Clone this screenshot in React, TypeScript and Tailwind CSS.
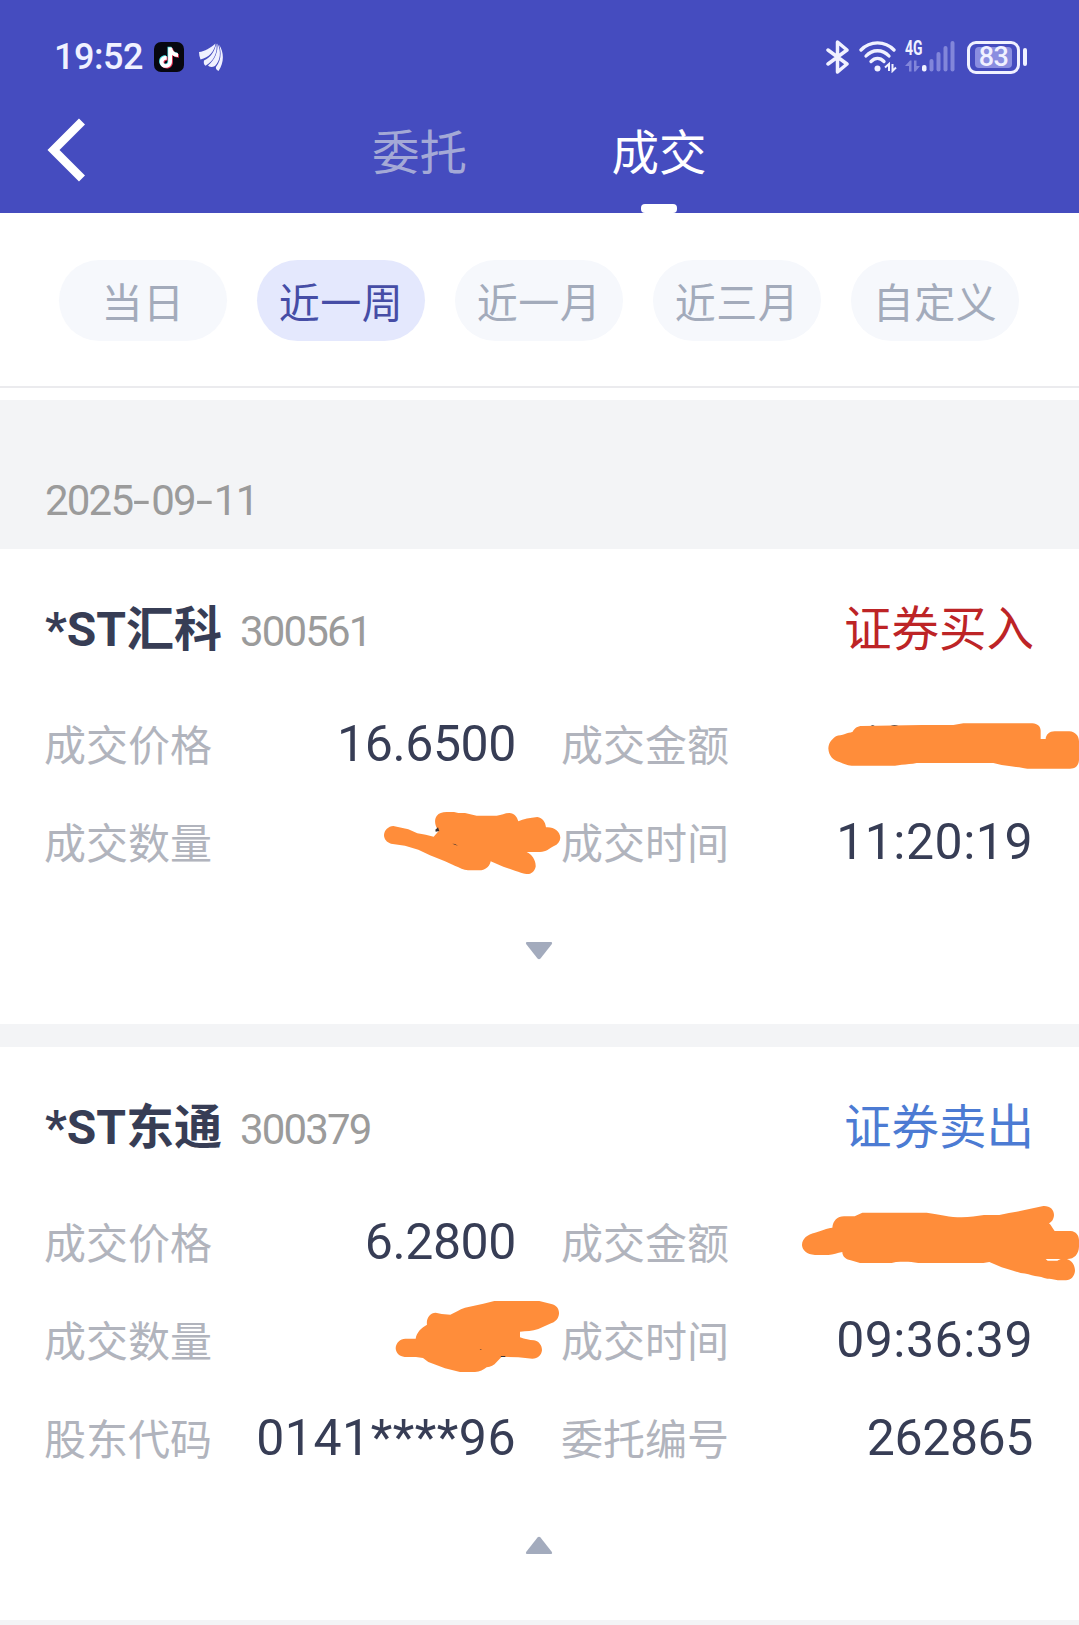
import React from 'react'
import clsx from 'clsx'

interface Field {
  label: string
  value?: string
}

interface Scribble {
  transform: string
  path: string
  specks?: string
}

interface Trade {
  name: string
  code: string
  side: 'buy' | 'sell'
  sideLabel: string
  fields: Field[]
  expanded: boolean
  scribbles: Scribble[]
}

const ranges = ['当日', '近一周', '近一月', '近三月', '自定义']

const trades: Trade[] = [
  {
    name: '*ST汇科',
    code: '300561',
    side: 'buy',
    sideLabel: '证券买入',
    expanded: false,
    fields: [
      { label: '成交价格', value: '16.6500' },
      { label: '成交金额' },
      { label: '成交数量' },
      { label: '成交时间', value: '11:20:19' },
    ],
    scribbles: [
      {
        transform: 'translate(780 31) scale(0.33333)',
        path: 'M145 505C146 485 160 475 168 469C176 464 186 467 195 462C203 457 210 459 218 455C223 445 232 438 246 438L425 435L520 435L550 430H757C773 431 782 440 782 452V477H797C798 464 808 454 824 454H868C886 455 897 468 897 484V540C896 556 887 566 870 566H742C728 565 722 561 708 561C695 558 680 558 665 555L640 549H410C395 552 380 553 365 554L345 557H215C200 557 190 550 178 546C160 542 146 528 145 505Z',
        specks: 'M272 438Q278 434 284 438ZM332 437Q343 433 355 437Z',
      },
      {
        transform: 'translate(330 151) scale(0.33333)',
        path: 'M162 405C163 390 175 379 190 378L235 388L262 400C280 402 295 407 311 410L326 393C314 378 312 360 320 348C327 339 336 336 350 336H372L385 339H405L440 347H500C515 346 524 339 538 339C553 340 561 350 565 364C580 357 600 353 622 351C638 353 646 366 648 382C672 380 690 394 691 413C690 425 683 433 672 438C656 446 650 455 630 456H590C606 464 618 480 617 500C613 516 603 523 589 522C578 521 567 516 557 513L520 500L482 484C480 497 470 507 454 511H414C400 510 389 503 376 498L345 484L300 466L265 449L225 437L183 431C170 427 162 417 162 405Z',
        specks: 'M316 389L324 382L328 393L317 395ZM367 431L375 432L384 437L377 435Z',
      },
    ],
  },
  {
    name: '*ST东通',
    code: '300379',
    side: 'sell',
    sideLabel: '证券卖出',
    expanded: true,
    fields: [
      { label: '成交价格', value: '6.2800' },
      { label: '成交金额' },
      { label: '成交数量' },
      { label: '成交时间', value: '09:36:39' },
      { label: '股东代码', value: '0141****96' },
      { label: '委托编号', value: '262865' },
    ],
    scribbles: [
      {
        transform: 'translate(780 33) scale(0.33333)',
        path: 'M66 495C67 474 82 464 105 458C125 453 140 444 157 443C159 422 172 409 192 409H224L247 398H440C480 403 510 412 545 412C570 412 590 408 612 405H658C680 399 700 397 720 393L790 378C810 377 822 389 822 405C821 419 815 426 807 430C814 436 817 444 824 453H872C888 454 897 467 897 480V500C896 522 883 537 862 537H797L803 542H832C840 538 848 535 858 536C876 540 885 556 885 573C883 590 873 600 858 601H838C825 600 820 596 802 596C788 593 780 589 765 588C752 586 740 580 722 579L665 562L628 546L610 549H415C390 544 370 545 348 546L335 549H240L212 541C196 538 187 528 187 516C172 519 160 524 145 525H105C80 523 67 511 66 495Z',
      },
      {
        transform: 'translate(330 153) scale(0.33333)',
        path: 'M197 445C198 427 211 417 226 416H257C260 396 275 383 291 374C288 355 300 338 317 338L335 342L361 344C375 338 388 328 405 323L460 311L493 303H628L664 312C680 315 688 328 687 341C686 354 678 364 665 369L625 387C606 394 590 393 570 395V412C585 417 598 420 612 421C628 424 636 437 636 451C634 466 624 476 607 476L565 472L515 470L500 486C492 497 482 500 470 502C460 510 450 516 435 516H390L345 505L295 486L279 474L258 471H224C208 469 198 460 197 445Z',
        specks: 'M512 468H526V471H513ZM449 447L455 448L453 450Z',
      },
    ],
  },
]

function BluetoothIcon() {
  return (
    <svg width="24" height="34" viewBox="0 0 24 34" fill="none" stroke="#f0f1ff" strokeWidth="3.500" strokeLinejoin="round" strokeLinecap="round">
      <path d="M2 10L21 24L11.500 32V2L21 10L2 24" />
    </svg>
  )
}

function WifiIcon() {
  return (
    <svg width="38" height="32" viewBox="0 0 38 32" fill="none" stroke="#f0f1ff" strokeWidth="3.300" strokeLinecap="round">
      <path d="M2 9C11 -0.500 26 -0.500 35 9" />
      <path d="M7 15C13.500 8 23.500 8 30 15" />
      <path d="M12 20.500C16 16.500 21 16.500 25 20.500" />
      <circle cx="18.500" cy="27.500" r="3" fill="#f0f1ff" stroke="none" />
      <path d="M26 26.500L30 23V30M33.500 23V30L37 26.500" strokeWidth="2" strokeLinecap="butt" />
    </svg>
  )
}

function SignalIcon() {
  return (
    <svg width="52" height="42" viewBox="0 -4 52 42">
      <text x="0" y="15" fontFamily="Roboto, sans-serif" fontSize="19.500" fontWeight="700" textLength="17.500" lengthAdjust="spacingAndGlyphs" fill="#f0f1ff">
        4G
      </text>
      <g fill="#8286da">
        <path d="M0 26L5 20.500H6.500V31.500H4V26ZM9 20.500H11.500V26H15L10.500 31.500H9Z" />
        <rect x="24.500" y="19" width="4" height="12.500" rx="2" />
        <rect x="31.500" y="12" width="4" height="19.500" rx="2" />
        <rect x="38.500" y="6" width="4" height="25.500" rx="2" />
        <rect x="45.500" y="1" width="4" height="30.500" rx="2" />
      </g>
      <rect x="17" y="25" width="4.500" height="6.500" rx="2" fill="#f0f1ff" />
    </svg>
  )
}

function Battery({ level }: { level: number }) {
  return (
    <div className="flex items-center gap-[3px]">
      <div className="flex h-[33px] w-[53px] items-center justify-center rounded-[9px] border-[3px] border-[#f0f1ff]">
        <div className="flex h-[21px] w-[37px] items-center justify-center rounded-[4px] bg-[#8a8ee0] pt-px text-[27px] font-medium leading-none tracking-[-0.5px] text-[#f0f1ff]">
          {level}
        </div>
      </div>
      <div className="h-[18px] w-[4px] rounded-[2px] bg-[#f0f1ff]" />
    </div>
  )
}

function TikTokIcon() {
  const note = 'M14.200 5.500H18C18.400 9 20.500 11 24 11.300V15C21.800 15 19.700 14.300 18 13.100V19.300C18 23.300 15.400 25.800 11.900 25.800C8.400 25.800 5.800 23.200 5.800 19.900C5.800 16.200 8.900 13.600 12.700 14.100V17.800C11 17.300 9.500 18.400 9.500 20C9.500 21.300 10.500 22.300 11.800 22.300C13.300 22.300 14.200 21.300 14.200 19.600Z'
  return (
    <svg width="30" height="30" viewBox="0 0 30 30">
      <rect width="30" height="30" rx="7" fill="#07070f" />
      <path d={note} fill="#4be3e6" transform="translate(-0.700 -0.700)" />
      <path d={note} fill="#ee3556" transform="translate(0.900 0.700)" />
      <path d={note} fill="#fff" />
    </svg>
  )
}

function FeatherIcon() {
  return (
    <svg width="24" height="28" viewBox="0 0 24 28" fill="#f0f1ff">
      <path d="M0 9C6 8.500 11 5 16.500 0.500C15.500 8.500 10 14.500 1.500 16.500C0.500 14 0 11.500 0 9Z" />
      <path d="M17.300 0.500C19 9 15 18 6.500 22.800C4.800 21.500 4.500 19.500 5 17.500C11.500 14.500 15.500 9 17.300 0.500Z" />
      <path d="M18.500 0.500C22.500 8 21.500 17.500 16 23C13 24.500 10 24 9 22.500C16 16.500 19 9 18.500 0.500Z" />
      <path d="M20 1.500C25.500 10 25 20 19.500 28C17.500 27 16.500 25.500 17 24C22.300 17.500 22.500 9.500 20 1.500Z" />
    </svg>
  )
}

function StatusBar() {
  return (
    <div className="flex h-[89px] items-center justify-between pt-[25px] pl-[54px] pr-[52px]">
      <div className="flex items-center">
        <span className="w-[100px] text-[36px] font-medium leading-none tracking-[-0.5px] text-[#f0f1ff]">19:52</span>
        <TikTokIcon />
        <div className="ml-[15px]">
          <FeatherIcon />
        </div>
      </div>
      <div className="flex items-center">
        <BluetoothIcon />
        <div className="ml-[9px]">
          <WifiIcon />
        </div>
        <div className="ml-[8px]">
          <SignalIcon />
        </div>
        <div className="ml-[10px]">
          <Battery level={83} />
        </div>
      </div>
    </div>
  )
}

function Header() {
  return (
    <header className="h-[213px] bg-[#454cbf]">
      <StatusBar />
      <nav className="flex h-[124px] items-stretch">
        <button className="flex w-[372px] items-start pl-[47px] pt-[29px]" aria-label="返回">
          <svg width="38" height="64" viewBox="0 0 38 64" fill="none" stroke="#fff" strokeWidth="8.500">
            <path d="M35 3.500L6.500 32L35 60.500" />
          </svg>
        </button>
        <button className="flex w-[96px] items-start pt-[30px] text-[47.500px] leading-[70px] text-[#a4a9d6]">委托</button>
        <button className="ml-[143px] flex w-[96px] flex-col items-center justify-between pt-[30px] text-[47.500px] leading-[70px] text-white">
          <span>成交</span>
          <span className="h-[9px] w-[36px] rounded-[4px] bg-white" />
        </button>
      </nav>
    </header>
  )
}

function DateHeading({ date }: { date: string }) {
  const [year, month, day] = date.split('-')
  const dash = <span className="inline-block w-[19px] scale-x-[1.45] text-center tracking-normal">-</span>
  return (
    <div className="flex h-[149px] items-end px-[45px] pb-[23px] text-[42px] leading-[50px] tracking-[-1.800px] text-[#9b9b9b]">
      <span>
        {year}
        {dash}
        {month}
        {dash}
        {day}
      </span>
    </div>
  )
}

function TradeItem({ trade }: { trade: Trade }) {
  return (
    <section className="relative bg-white px-[45px]">
      <div className="flex h-[146px] items-baseline justify-between pt-[46px] leading-[70px]">
        <div className="flex items-baseline">
          <h2 className="text-[48px] font-bold text-[#373d55]">{trade.name}</h2>
          <span className="ml-[18px] text-[42px] tracking-[-1.900px] text-[#9b9b9b]">{trade.code}</span>
        </div>
        <span className={clsx('text-[47.500px]', trade.side === 'buy' ? 'text-[#bd2426]' : 'text-[#4c7bd3]')}>
          {trade.sideLabel}
        </span>
      </div>

      <div className="grid grid-cols-2 gap-x-[45px]">
        {trade.fields.map((field) => (
          <div key={field.label} className="flex h-[98px] items-center justify-between pr-[1px]">
            <span className="-ml-px pt-[5px] text-[42px] text-[#b1b4bd]">{field.label}</span>
            {field.value && (
              <span className={clsx('text-[50px] text-[#373d55]', /[:*]/.test(field.value) ? 'tracking-[0.500px]' : 'tracking-[-0.400px]')}>
                {field.value}
              </span>
            )}
          </div>
        ))}
      </div>

      <div className="flex h-[133px] justify-center pr-[2px] pt-[51px]">
        <svg width="28" height="18" viewBox="0 0 28 18" fill="#a3abbd" className={clsx(trade.expanded && '-mt-[2px] rotate-180')}>
          <path d="M2 0H26Q28 0.500 26.500 2.500L15.500 16.500Q14 18 12.500 16.500L1.500 2.500Q0 0.500 2 0Z" />
        </svg>
      </div>

      {/* marker strokes over the private amounts */}
      <svg className="pointer-events-none absolute left-0 top-0 h-full w-full">
        {trade.scribbles.map((s) => (
          <g key={s.transform} transform={s.transform}>
            <path d={s.path} fill="#ff8d3a" />
            {s.specks && <path d={s.specks} fill="#3b3434" />}
          </g>
        ))}
      </svg>
    </section>
  )
}

export default function App() {
  return (
    <div className="h-[1625px] w-[1079px] overflow-hidden bg-[#f3f4f6] font-[Roboto,'Noto_Sans_CJK_SC',sans-serif]">
      <Header />

      <div className="h-[187px] bg-white">
        <div className="flex h-[175px] gap-[30px] border-b-2 border-[#ebebee] pl-[59px] pt-[47px]">
          {ranges.map((range, index) => (
            <button
              key={range}
              className={clsx(
                'h-[81px] w-[168px] rounded-full pt-[9px] text-[41px] tracking-[0.5px]',
                index === 1 ? 'bg-[#e4e8fd] text-[#464da6]' : 'bg-[#f6f8fc] text-[#a3abbb]'
              )}
            >
              {range}
            </button>
          ))}
        </div>
      </div>

      <DateHeading date="2025-09-11" />

      <div className="flex flex-col gap-[23px]">
        {trades.map((trade) => (
          <TradeItem key={trade.code} trade={trade} />
        ))}
      </div>
    </div>
  )
}
